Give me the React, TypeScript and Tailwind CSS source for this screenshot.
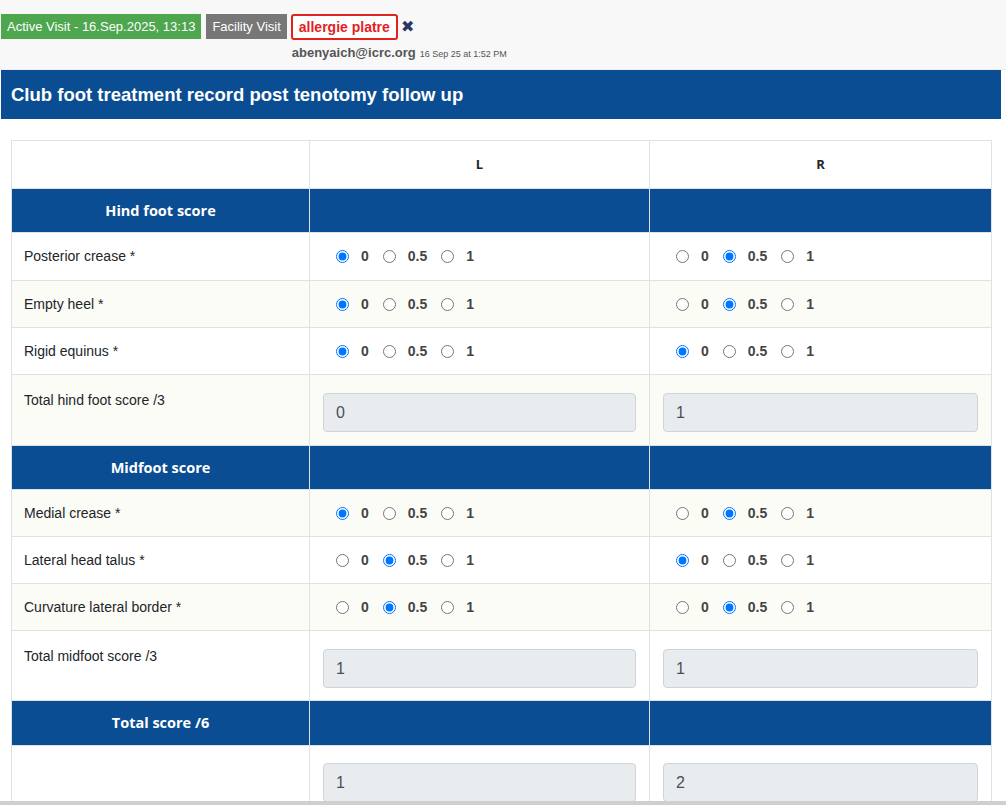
import React from 'react'

type Val = '0' | '0.5' | '1'

const hindRows: { label: string; l: Val; r: Val; h: string; bg: string }[] = [
  { label: 'Posterior crease *', l: '0', r: '0.5', h: 'h-[48px]', bg: 'bg-white' },
  { label: 'Empty heel *', l: '0', r: '0.5', h: 'h-[47px]', bg: 'bg-[#fcfcf6]' },
  { label: 'Rigid equinus *', l: '0', r: '0', h: 'h-[47px]', bg: 'bg-white' },
]

const midRows: { label: string; l: Val; r: Val; h: string; bg: string }[] = [
  { label: 'Medial crease *', l: '0', r: '0.5', h: 'h-[47px]', bg: 'bg-[#fcfcf6]' },
  { label: 'Lateral head talus *', l: '0.5', r: '0', h: 'h-[47px]', bg: 'bg-white' },
  { label: 'Curvature lateral border *', l: '0.5', r: '0.5', h: 'h-[47px]', bg: 'bg-[#fcfcf6]' },
]

const cell = 'border border-[#dee2e6] p-0'

function Radios({ name, value }: { name: string; value: Val }) {
  const opts: Val[] = ['0', '0.5', '1']
  return (
    <div className="flex items-center pl-[26px]">
      {opts.map(o => (
        <label key={o} className="flex items-center">
          <input type="radio" name={name} defaultChecked={o === value} className="m-0 w-[13px] h-[13px]" />
          <span className="ml-[12px] mr-[14px] text-[14px] font-bold text-[#444]">{o}</span>
        </label>
      ))}
    </div>
  )
}

function Section({ title, h }: { title: string; h: string }) {
  return (
    <tr className={`${h} bg-[#0a4d92]`}>
      <td className={`${cell} text-center text-white font-bold text-[14.5px] font-['Open_Sans',sans-serif]`}>{title}</td>
      <td className={cell}></td>
      <td className={cell}></td>
    </tr>
  )
}

function TotalRow({ label, l, r, h, bg, pt }: { label: string; l: string; r: string; h: string; bg: string; pt: string }) {
  return (
    <tr className={`${h} ${bg}`}>
      <td className={`${cell} align-top px-[12px] pt-[15px] leading-[20px]`}>{label}</td>
      {[l, r].map((v, i) => (
        <td key={i} className={`${cell} align-top px-[13px] ${pt}`}>
          <div className="h-[39px] rounded-[4px] border border-[#ced4da] bg-[#e9ecef] px-[12px] flex items-center text-[16px] text-[#495057]">
            {v}
          </div>
        </td>
      ))}
    </tr>
  )
}

export default function App() {
  return (
    <div className="min-h-screen bg-white font-['Liberation_Sans',Arial,sans-serif] text-[#212529]">
      {/* visit bar */}
      <div className="h-[70px] bg-[#f8f8f8] border-b border-[#ececec] pt-[14px]">
        <div className="flex items-start">
          <span className="ml-[1px] h-[25px] px-[6px] flex items-center bg-[#4ea64e] text-white text-[13px]">
            Active Visit - 16.Sep.2025, 13:13
          </span>
          <span className="ml-[5px] h-[25px] px-[6px] flex items-center bg-[#777] text-white text-[13px]">
            Facility Visit
          </span>
          <div className="ml-[4px] flex flex-col">
            <div className="flex items-center">
              <span className="h-[26px] px-[6px] flex items-center border-2 border-[#e3211f] rounded-[3px] bg-white text-[#e3211f] font-bold text-[14px]">
                allergie platre
              </span>
              <span className="ml-[3px] text-[#2a3563] text-[16px] leading-none">✖</span>
            </div>
            <div className="mt-[3px] ml-[1px] flex items-baseline gap-[4px] text-[#555]">
              <span className="text-[13px] font-bold">abenyaich@icrc.org</span>
              <span className="text-[9px]">16 Sep 25 at 1:52 PM</span>
            </div>
          </div>
        </div>
      </div>

      <div className="ml-[1px] w-[1000px] pb-[20px]">
        <div className="h-[49px] bg-[#0a4d92] flex items-center px-[10px]">
          <h1 className="text-white font-bold text-[18.5px]">Club foot treatment record post tenotomy follow up</h1>
        </div>

        <div className="px-[10px] pt-[21px]">
          <table className="w-[980px] table-fixed border-collapse text-[14px]">
            <colgroup>
              <col className="w-[298px]" />
              <col className="w-[340px]" />
              <col className="w-[342px]" />
            </colgroup>
            <tbody>
              <tr className="h-[48px] bg-white">
                <td className={cell}></td>
                <td className={`${cell} text-center font-bold text-[13px] font-['Open_Sans',sans-serif]`}>L</td>
                <td className={`${cell} text-center font-bold text-[13px] font-['Open_Sans',sans-serif]`}>R</td>
              </tr>
              <Section title="Hind foot score" h="h-[44px]" />
              {hindRows.map(r => (
                <tr key={r.label} className={`${r.h} ${r.bg}`}>
                  <td className={`${cell} px-[12px]`}>{r.label}</td>
                  <td className={cell}><Radios name={r.label + 'L'} value={r.l} /></td>
                  <td className={cell}><Radios name={r.label + 'R'} value={r.r} /></td>
                </tr>
              ))}
              <TotalRow label="Total hind foot score /3" l="0" r="1" h="h-[71px]" bg="bg-[#fcfcf6]" pt="pt-[18px]" />
              <Section title="Midfoot score" h="h-[44px]" />
              {midRows.map(r => (
                <tr key={r.label} className={`${r.h} ${r.bg}`}>
                  <td className={`${cell} px-[12px]`}>{r.label}</td>
                  <td className={cell}><Radios name={r.label + 'L'} value={r.l} /></td>
                  <td className={cell}><Radios name={r.label + 'R'} value={r.r} /></td>
                </tr>
              ))}
              <TotalRow label="Total midfoot score /3" l="1" r="1" h="h-[70px]" bg="bg-white" pt="pt-[18px]" />
              <Section title="Total score /6" h="h-[45px]" />
              <TotalRow label="" l="1" r="2" h="h-[71px]" bg="bg-white" pt="pt-[17px]" />
            </tbody>
          </table>
        </div>
      </div>

      <div className="fixed left-0 right-0 bottom-0 h-[4px] bg-[#cfcfcf]" />
    </div>
  )
}
